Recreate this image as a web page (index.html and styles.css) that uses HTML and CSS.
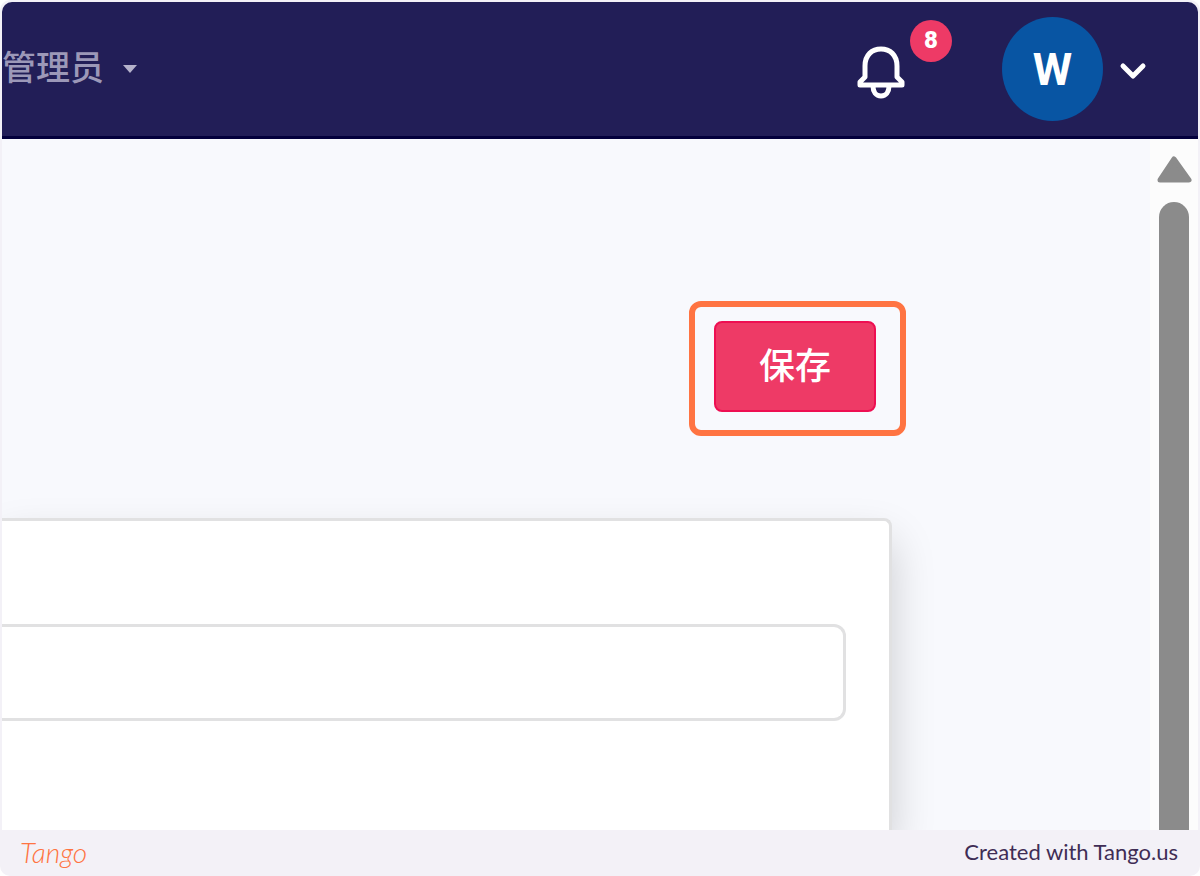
FILE: index.html
```html
<!DOCTYPE html>
<html lang="zh-CN">
<head>
    <meta charset="UTF-8">
    <meta name="viewport" content="width=device-width, initial-scale=1.0">
    <title>管理员</title>
    <link rel="stylesheet" href="styles.css">
</head>
<body>
    <div class="frame">
        <header class="topbar">
            <button type="button" class="role-menu">
                管理员
                <svg class="caret" viewBox="0 0 18 10" aria-hidden="true"><path d="M2 1h14L9 9z"/></svg>
            </button>

            <div class="tools">
                <button type="button" class="bell" aria-label="通知">
                    <svg viewBox="0 0 48 54" aria-hidden="true">
                        <path d="M8 31V20C8 9 15 3 24 3s16 6 16 17v11l5 5v3H3v-3z"/>
                        <path d="M16 40c0 6 3 10 8 10s8-4 8-10"/>
                    </svg>
                    <span class="badge">8</span>
                </button>
                <button type="button" class="account" aria-label="W">
                    <span class="avatar">W</span>
                    <svg class="chevron" viewBox="0 0 28 22" aria-hidden="true"><path d="M4 8l10 10L24 8"/></svg>
                </button>
            </div>
        </header>

        <div class="body">
            <main class="content">
                <div class="actions">
                    <div class="highlight">
                        <button type="submit" form="edit-form" class="save">保存</button>
                    </div>
                </div>
                <form class="card" id="edit-form">
                    <input type="text" class="field" aria-label="名称">
                </form>
            </main>
            <div class="scrollbar" aria-hidden="true">
                <svg class="arrow" viewBox="0 0 35 27"><path d="M17 3L32 24H3z"/></svg>
                <div class="thumb"></div>
            </div>
        </div>
    </div>

    <footer class="footer">
        <a href="#" class="brand">Tango</a>
        <a href="#" class="credit">Created with Tango.us</a>
    </footer>
</body>
</html>
```
FILE: styles.css
```css
* {
    box-sizing: border-box;
}
html {
    background: white;
}
body {
    margin: 0;
    min-height: 100vh;
    display: flex;
    flex-direction: column;
    background: #f3f1f7;
    border-radius: 10px;
    font-family: Roboto, "Noto Sans CJK SC", sans-serif;
}
button {
    border: none;
    padding: 0;
    background: none;
    font-family: inherit;
    cursor: pointer;
}
a {
    text-decoration: none;
}

.frame {
    flex: 1;
    display: flex;
    flex-direction: column;
    margin: 2px 2px 0;
    border-radius: 10px 10px 0 0;
    overflow: hidden;
}

/* top bar */
.topbar {
    display: flex;
    justify-content: space-between;
    align-items: center;
    height: 137px;
    padding-right: 51px;
    background: #221e57;
    border-bottom: 3px solid #03003c;
}
.role-menu {
    display: flex;
    align-items: center;
    gap: 17px;
    padding-bottom: 2px;
    color: #9c98b8;
    font-size: 34px;
    font-weight: 500;
    line-height: 40px;
}
.caret {
    width: 18px;
    height: 10px;
    margin-top: 2px;
    fill: #b5b2cb;
}
.tools {
    display: flex;
    align-items: center;
    gap: 97px;
}
.bell {
    position: relative;
    width: 48px;
    height: 54px;
    margin-top: 7px;
}
.bell svg {
    display: block;
    fill: none;
    stroke: white;
    stroke-width: 5;
    stroke-linejoin: round;
}
.badge {
    position: absolute;
    top: -26px;
    right: -47px;
    width: 42px;
    height: 42px;
    border-radius: 50%;
    background: #ee3a66;
    color: white;
    font-size: 24px;
    font-weight: 900;
    line-height: 40px;
}
.account {
    display: flex;
    align-items: center;
    gap: 16px;
}
.avatar {
    width: 101px;
    height: 104px;
    border-radius: 50%;
    background: #0855a3;
    color: white;
    font-size: 45px;
    font-weight: bold;
    line-height: 106px;
}
.chevron {
    width: 28px;
    height: 22px;
    fill: none;
    stroke: white;
    stroke-width: 5;
    stroke-linecap: round;
    stroke-linejoin: round;
}

/* page */
.body {
    flex: 1;
    display: flex;
    background: #f8f9fd;
}
.content {
    flex: 1;
    display: flex;
    flex-direction: column;
    min-width: 0;
    overflow: hidden;
}
.actions {
    display: flex;
    justify-content: flex-end;
    padding: 162px 244px 82px 0;
}
.highlight {
    padding: 14px 24px 18px 19px;
    border: 6px solid #ff7442;
    border-radius: 12px;
}
.save {
    display: block;
    width: 162px;
    height: 91px;
    padding-bottom: 8px;
    border: 2px solid #ee0f52;
    border-radius: 8px;
    background: #ee3a66;
    color: white;
    font-size: 36px;
    font-weight: 500;
}
.card {
    flex: 1;
    margin-right: 258px;
    padding: 103px 43px 0 0;
    border: 3px solid #e1e1e2;
    border-width: 3px 3px 0 0;
    border-radius: 0 8px 0 0;
    background: white;
    box-shadow: 0 22px 44px rgba(0, 0, 0, 0.18);
}
.field {
    display: block;
    width: 100%;
    height: 97px;
    padding: 0 24px;
    border: 3px solid #e1e1e2;
    border-left: none;
    border-radius: 0 12px 12px 0;
    background: white;
    font-size: 36px;
}

.scrollbar {
    display: flex;
    flex-direction: column;
    align-items: center;
    gap: 19px;
    width: 48px;
    padding-top: 17px;
    background: #fcfcfc;
}
.arrow {
    width: 35px;
    height: 27px;
    fill: #8b8b8b;
    stroke: #8b8b8b;
    stroke-width: 5;
    stroke-linejoin: round;
}
.thumb {
    flex: 1;
    width: 30px;
    border-radius: 15px 15px 0 0;
    background: #8b8b8b;
}

/* footer */
.footer {
    display: flex;
    justify-content: space-between;
    align-items: center;
    height: 46px;
    padding: 0 22px 2px 20px;
}
.brand {
    color: #ff7442;
    font-family: Lato, sans-serif;
    font-size: 28px;
    font-style: italic;
    font-weight: 300;
    line-height: 32px;
}
.credit {
    color: #3f2d55;
    font-family: Lato, sans-serif;
    font-size: 22px;
    line-height: 32px;
}
```
